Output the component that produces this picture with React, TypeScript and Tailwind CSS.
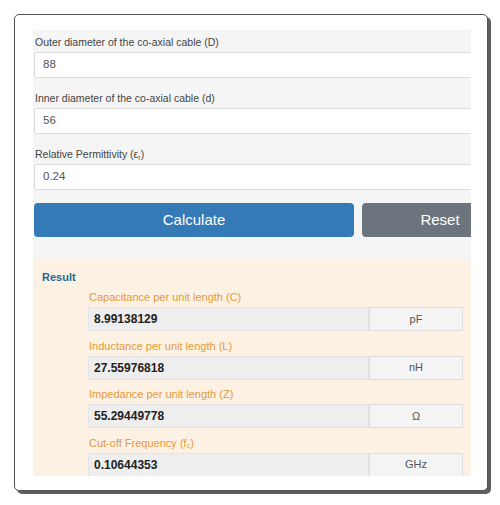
import React from "react";

// Coaxial cable calculator card
const inputs = [
  { label: <>Outer diameter of the co-axial cable (D)</>, value: "88" },
  { label: <>Inner diameter of the co-axial cable (d)</>, value: "56" },
  {
    label: (
      <>
        Relative Permittivity (ε<sub className="text-[7px]">r</sub>)
      </>
    ),
    value: "0.24",
  },
];

const results = [
  { label: <>Capacitance per unit length (C)</>, value: "8.99138129", unit: "pF" },
  { label: <>Inductance per unit length (L)</>, value: "27.55976818", unit: "nH" },
  { label: <>Impedance per unit length (Z)</>, value: "55.29449778", unit: "Ω" },
  {
    label: (
      <>
        Cut-off Frequency (f<sub className="text-[7px]">c</sub>)
      </>
    ),
    value: "0.10644353",
    unit: "GHz",
  },
];

export default function App() {
  return (
    <div
      className="w-[500px] h-[505px] bg-white pt-[14px] pl-[14px]"
      style={{ fontFamily: '"Liberation Sans", Arial, sans-serif' }}
    >
      <div className="w-[474px] h-[477px] bg-white border border-[#555] rounded-[5px] shadow-[3px_3px_0_#5e5e5e] pt-[15px] pl-[18px]">
        <div className="w-[438px] h-[446px] overflow-hidden">
          {/* Input form */}
          <div className="w-[520px] bg-[#f5f5f5] pt-[4px] pb-[23px] pl-[1px]">
            {inputs.map((item, i) => (
              <div key={i} className={i > 0 ? "mt-[12px]" : ""}>
                <div className="pl-[1px] text-[10.5px] leading-[16px] text-[#444] mb-[2px]">
                  {item.label}
                </div>
                <div className="h-[26px] bg-white border border-[#dcdcdc] rounded-[3px] pl-[8px] flex items-center text-[11.5px] text-[#555]">
                  {item.value}
                </div>
              </div>
            ))}
            <div className="flex gap-[8px] mt-[13px]">
              <button className="w-[320px] h-[34px] rounded-[4px] bg-[#337ab7] text-white text-[15px]">
                Calculate
              </button>
              <button className="w-[156px] h-[34px] rounded-[4px] bg-[#6c757d] text-white text-[15px]">
                Reset
              </button>
            </div>
          </div>

          {/* Result section */}
          <div className="w-[520px] bg-[#fdf1e3] pt-[9px] pb-[20px]">
            <div className="pl-[9px] text-[11px] leading-[16px] font-bold text-[#1b6a9a]">Result</div>
            <div className="pl-[55px] mt-[4px]">
              {results.map((r, i) => (
                <div key={i} className={i > 0 ? "mt-[6.5px]" : ""}>
                  <div className="pl-[1px] text-[11px] leading-[16px] text-[#e39a3c] mb-[2px]">
                    {r.label}
                  </div>
                  <div className="flex h-[24px]">
                    <div className="w-[281px] bg-[#eeeeee] border border-[#e4e4e4] flex items-center pl-[5px] text-[12px] font-bold text-[#222]">
                      {r.value}
                    </div>
                    <div className="w-[94px] bg-[#f4f4f4] border border-[#dddddd] flex items-center justify-center text-[11px] text-[#555]">
                      {r.unit}
                    </div>
                  </div>
                </div>
              ))}
            </div>
          </div>
        </div>
      </div>
    </div>
  );
}
